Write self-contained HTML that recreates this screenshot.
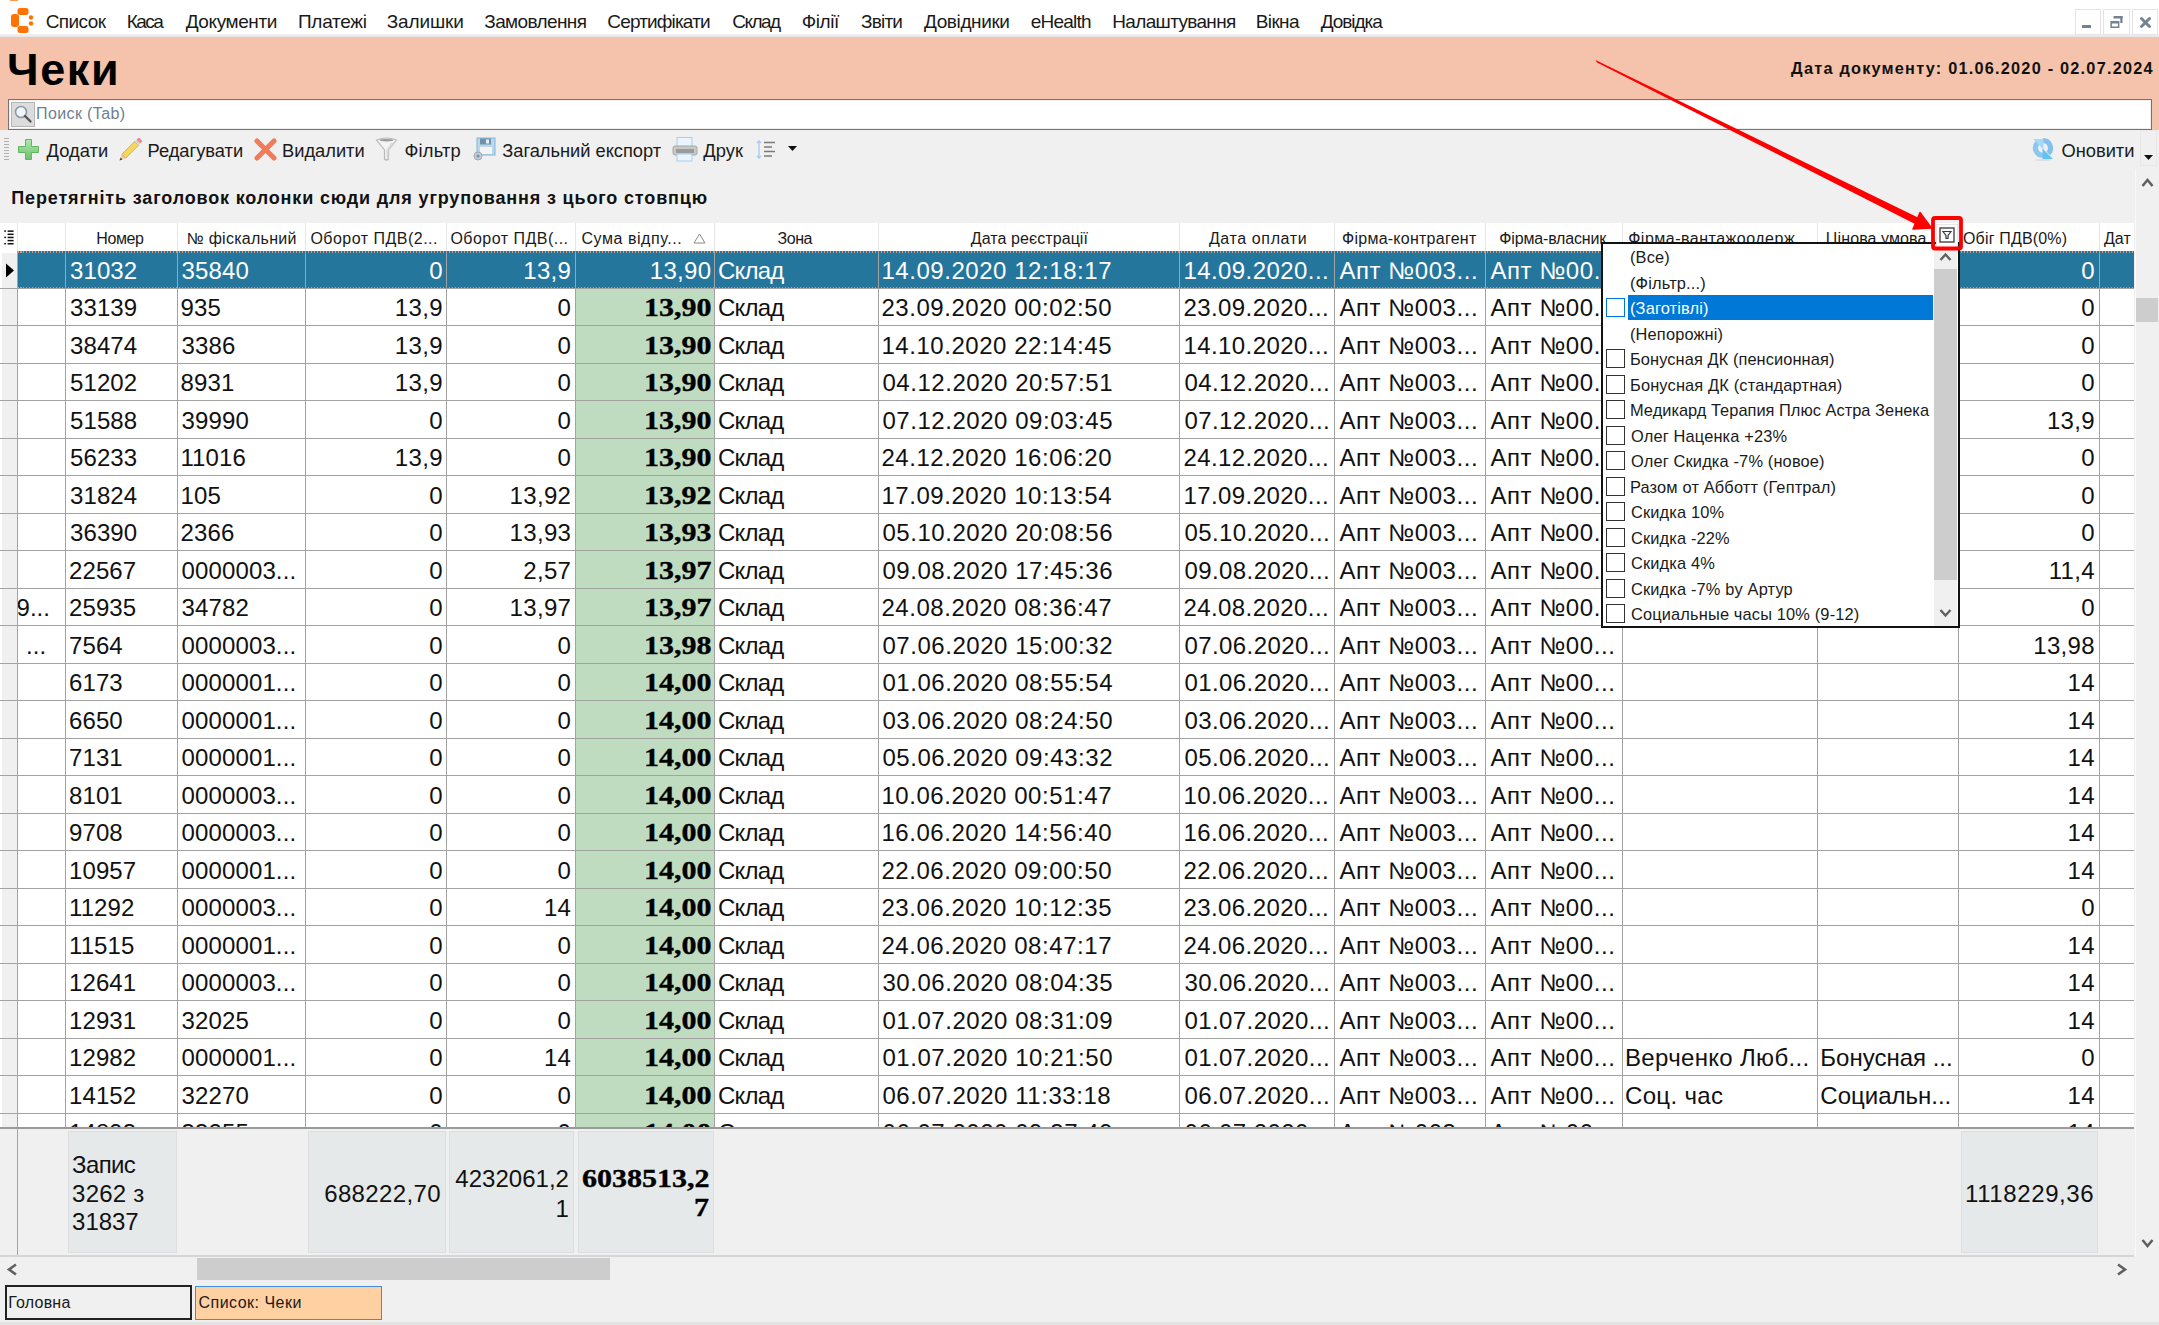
<!DOCTYPE html>
<html><head><meta charset="utf-8"><style>
*{margin:0;padding:0;box-sizing:border-box}
html,body{width:2159px;height:1325px;overflow:hidden;background:#f0f0f0;font-family:'Liberation Sans', sans-serif;color:#000}
.a{position:absolute}
.t{position:absolute;white-space:nowrap;line-height:1;left:0;top:0}
</style></head><body>
<div class="a" style="left:0;top:0;width:2159px;height:35px;background:#fff"></div>
<div class="a" style="left:0;top:34px;width:2159px;height:3px;background:linear-gradient(#f4f4f4,#e4e4e4)"></div>
<div class="a" style="left:10px;top:0;width:8px;height:1px;background:#ff9a50"></div>
<svg class="a" style="left:10px;top:7px" width="25" height="27" viewBox="0 0 25 27">
<g fill="#ff7300">
<rect x="7.5" y="1" width="11" height="7" rx="2.5"></rect>
<rect x="1" y="7" width="8" height="13" rx="3"></rect>
<rect x="7.5" y="19" width="11" height="7" rx="2.5"></rect>
<circle cx="21" cy="10.5" r="2.2"></circle>
<circle cx="21" cy="16.5" r="2.2"></circle>
</g></svg>
<div class="t" style="font-size: 19px; color: rgb(26, 26, 26); letter-spacing: -0.581px; top: 12px; left: 45.7px;">Список</div>
<div class="t" style="font-size: 19px; color: rgb(26, 26, 26); letter-spacing: -1.512px; top: 12px; left: 126.7px;">Каса</div>
<div class="t" style="font-size: 19px; color: rgb(26, 26, 26); letter-spacing: -0.411px; top: 12px; left: 185.7px;">Документи</div>
<div class="t" style="font-size: 19px; color: rgb(26, 26, 26); letter-spacing: -0.291px; top: 12px; left: 298px;">Платежі</div>
<div class="t" style="font-size: 19px; color: rgb(26, 26, 26); letter-spacing: -0.116px; top: 12px; left: 386.7px;">Залишки</div>
<div class="t" style="font-size: 19px; color: rgb(26, 26, 26); letter-spacing: -0.619px; top: 12px; left: 484.3px;">Замовлення</div>
<div class="t" style="font-size: 19px; color: rgb(26, 26, 26); letter-spacing: -0.849px; top: 12px; left: 607.3px;">Сертифікати</div>
<div class="t" style="font-size: 19px; color: rgb(26, 26, 26); letter-spacing: -1.55px; top: 12px; left: 732.3px;">Склад</div>
<div class="t" style="font-size: 19px; color: rgb(26, 26, 26); letter-spacing: -0.418px; top: 12px; left: 801.7px;">Філії</div>
<div class="t" style="font-size: 19px; color: rgb(26, 26, 26); letter-spacing: -0.798px; top: 12px; left: 861px;">Звіти</div>
<div class="t" style="font-size: 19px; color: rgb(26, 26, 26); letter-spacing: -0.396px; top: 12px; left: 924px;">Довідники</div>
<div class="t" style="font-size: 19px; color: rgb(26, 26, 26); letter-spacing: -0.77px; top: 12px; left: 1030.7px;">eHealth</div>
<div class="t" style="font-size: 19px; color: rgb(26, 26, 26); letter-spacing: -0.667px; top: 12px; left: 1112.3px;">Налаштування</div>
<div class="t" style="font-size: 19px; color: rgb(26, 26, 26); letter-spacing: -0.6px; top: 12px; left: 1255.7px;">Вікна</div>
<div class="t" style="font-size: 19px; color: rgb(26, 26, 26); letter-spacing: -1.03px; top: 12px; left: 1320.7px;">Довідка</div>
<div class="a" style="left:2075px;top:9px;width:26px;height:26px;background:#fff;border:1px solid #e4e4e4"></div>
<div class="a" style="left:2103px;top:9px;width:27px;height:26px;background:#fff;border:1px solid #e4e4e4"></div>
<div class="a" style="left:2132px;top:9px;width:26px;height:26px;background:#fff;border:1px solid #e4e4e4"></div>
<div class="a" style="left:2082px;top:25px;width:9px;height:3px;background:#718292"></div>
<svg class="a" style="left:2110px;top:16px" width="13" height="12" viewBox="0 0 13 12"><g fill="#718292"><rect x="3.5" y="0" width="9" height="2.5"></rect><rect x="10.3" y="0" width="2.2" height="7"></rect><rect x="0.4" y="5" width="9" height="7"></rect></g><rect x="1.9" y="7.5" width="6" height="3" fill="#fff"></rect></svg>
<svg class="a" style="left:2140px;top:17px" width="11" height="11" viewBox="0 0 11 11"><g stroke="#718292" stroke-width="2.8" stroke-linecap="round"><line x1="1.5" y1="1.5" x2="9.5" y2="9.5"></line><line x1="9.5" y1="1.5" x2="1.5" y2="9.5"></line></g></svg>
<div class="a" style="left:0;top:37px;width:2159px;height:93px;background:#f5c3ab"></div>
<div class="t" style="font-size: 45px; color: rgb(0, 0, 0); font-weight: 700; letter-spacing: 1.611px; top: 47px; left: 7px;">Чеки</div>
<div class="t" style="font-size: 16.3px; color: rgb(17, 17, 17); font-weight: 700; letter-spacing: 1.222px; top: 60.3px; left: 1791.1px;">Дата документу: 01.06.2020 - 02.07.2024</div>
<div class="a" style="left:8px;top:99px;width:2144px;height:31px;background:#fff;border:1px solid #747474;box-shadow:inset 0 0 0 1px #eeeeee"></div>
<div class="a" style="left:11px;top:102px;width:24px;height:25px;background:#dcdcdc;border:1px solid #b4b4b4"></div>
<svg class="a" style="left:13px;top:104px" width="20" height="20" viewBox="0 0 20 20"><circle cx="8" cy="8" r="5.5" fill="#eef6fb" stroke="#8a9aa6" stroke-width="1.6"></circle><line x1="12" y1="12" x2="17.5" y2="17.5" stroke="#555" stroke-width="2.4" stroke-linecap="round"></line></svg>
<div class="t" style="font-size: 16px; color: rgb(110, 127, 146); letter-spacing: 0.389px; top: 106px; left: 36px;">Поиск (Tab)</div>
<div class="a" style="left:4px;top:138px;width:5px;height:1.2px;background:#b0b0b0"></div>
<div class="a" style="left:4px;top:141px;width:5px;height:1.2px;background:#b0b0b0"></div>
<div class="a" style="left:4px;top:144px;width:5px;height:1.2px;background:#b0b0b0"></div>
<div class="a" style="left:4px;top:147px;width:5px;height:1.2px;background:#b0b0b0"></div>
<div class="a" style="left:4px;top:150px;width:5px;height:1.2px;background:#b0b0b0"></div>
<div class="a" style="left:4px;top:153px;width:5px;height:1.2px;background:#b0b0b0"></div>
<div class="a" style="left:4px;top:156px;width:5px;height:1.2px;background:#b0b0b0"></div>
<div class="a" style="left:4px;top:159px;width:5px;height:1.2px;background:#b0b0b0"></div>
<svg class="a" style="left:17px;top:138px" width="23" height="23" viewBox="0 0 23 23"><defs><linearGradient id="gp" x1="0" y1="0" x2="0" y2="1"><stop offset="0" stop-color="#aee8ae"></stop><stop offset="1" stop-color="#6cc06c"></stop></linearGradient></defs><path d="M8.5,1.5 H14.5 V8.5 H21.5 V14.5 H14.5 V21.5 H8.5 V14.5 H1.5 V8.5 H8.5 Z" fill="url(#gp)" stroke="#62b462" stroke-width="1" stroke-linejoin="round"></path></svg>
<svg class="a" style="left:116px;top:135px" width="29" height="29" viewBox="0 0 29 29">
<g transform="rotate(-45 14.5 14.5)">
<polygon points="-1,14.5 5,11.8 5,17.2" fill="#f4c8a8"></polygon><polygon points="-1,14.5 1.8,13.2 1.8,15.8" fill="#444"></polygon>
<rect x="5" y="11.8" width="18" height="5.4" fill="#f6d65c" stroke="#c8a03a" stroke-width="0.7"></rect>
<rect x="23" y="11.8" width="2.6" height="5.4" fill="#d6d6d6"></rect><rect x="25.6" y="11.8" width="3.4" height="5.4" rx="1" fill="#f08a8a"></rect></g></svg>
<svg class="a" style="left:254px;top:138px" width="23" height="23" viewBox="0 0 23 23"><g stroke="#f07a5a" stroke-width="5" stroke-linecap="round"><line x1="3" y1="3" x2="20" y2="20"></line><line x1="20" y1="3" x2="3" y2="20"></line></g></svg>
<svg class="a" style="left:375px;top:137px" width="23" height="25" viewBox="0 0 23 25"><path d="M1.5,3 Q11.5,-1 21.5,3 L13.5,13 L13.5,22 Q11.5,24 9.5,22 L9.5,13 Z" fill="#f4f4f4" stroke="#b9b9b9" stroke-width="1.2"></path><ellipse cx="11.5" cy="3.2" rx="7" ry="1.2" fill="#9a9a9a"></ellipse><path d="M13.5,13 L13.5,22 L11.5,22 L11.5,13 L16,6 L19,6Z" fill="#d8d8d8"></path></svg>
<svg class="a" style="left:472px;top:137px" width="25" height="25" viewBox="0 0 25 25"><rect x="5" y="1" width="18" height="17" fill="#bcd6ea" stroke="#7eb6d8" stroke-width="1"></rect><rect x="8" y="1.5" width="11" height="6" fill="#7090b0"></rect><rect x="14" y="2.5" width="3" height="4" fill="#e8f0f8"></rect><rect x="8" y="10" width="12" height="7" fill="#f4f4f4"></rect><circle cx="6" cy="19" r="4" fill="#c8ccd0" stroke="#a0a8b0"></circle><circle cx="6" cy="19" r="1.5" fill="#6090c0"></circle></svg>
<svg class="a" style="left:672px;top:137px" width="26" height="25" viewBox="0 0 26 25"><rect x="5" y="0.5" width="15" height="10" fill="#eaf4fc" stroke="#a8cdef"></rect><rect x="1" y="9" width="24" height="9" rx="2" fill="#c8c8c8" stroke="#a8a8a8"></rect><rect x="4" y="12" width="18" height="4" fill="#9a9a9a"></rect><rect x="5" y="17" width="15" height="7" fill="#eaf4fc" stroke="#a8cdef"></rect></svg>
<svg class="a" style="left:756px;top:139px" width="20" height="21" viewBox="0 0 20 21"><g stroke="#a8c8ee" stroke-width="1.3" fill="none"><line x1="3" y1="2" x2="3" y2="19"></line><polyline points="1,4 3,2 5,4"></polyline><polyline points="1,17 3,19 5,17"></polyline></g><g stroke="#7a7a7a" stroke-width="1.5"><line x1="8" y1="3.5" x2="19" y2="3.5"></line><line x1="8" y1="8" x2="16" y2="8"></line><line x1="8" y1="12.5" x2="19" y2="12.5"></line><line x1="8" y1="17" x2="16" y2="17"></line></g></svg>
<svg class="a" style="left:788px;top:146px" width="9" height="6" viewBox="0 0 9 6"><polygon points="0,0 9,0 4.5,5" fill="#111"></polygon></svg>
<div class="t" style="font-size: 18.3px; color: rgb(26, 26, 26); letter-spacing: 0.069px; top: 141.7px; left: 46.5px;">Додати</div>
<div class="t" style="font-size: 18.3px; color: rgb(26, 26, 26); letter-spacing: 0.006px; top: 141.7px; left: 147.5px;">Редагувати</div>
<div class="t" style="font-size: 18.3px; color: rgb(26, 26, 26); letter-spacing: 0.001px; top: 141.7px; left: 282px;">Видалити</div>
<div class="t" style="font-size: 18.3px; color: rgb(26, 26, 26); letter-spacing: 0.221px; top: 141.7px; left: 404.4px;">Фільтр</div>
<div class="t" style="font-size: 18.3px; color: rgb(26, 26, 26); letter-spacing: -0.023px; top: 141.7px; left: 502.3px;">Загальний експорт</div>
<div class="t" style="font-size: 18.3px; color: rgb(26, 26, 26); letter-spacing: 0.072px; top: 141.7px; left: 703.3px;">Друк</div>
<div class="t" style="font-size: 18.3px; color: rgb(26, 26, 26); letter-spacing: -0.013px; top: 141.7px; left: 2061.5px;">Оновити</div>
<svg class="a" style="left:2031px;top:137px" width="24" height="24" viewBox="0 0 24 24"><path d="M12,18.5 A7.5,7.5 0 0 1 6.7,5.7" stroke="#8fc6ee" stroke-width="5.2" fill="none"></path><path d="M12,3.5 A7.5,7.5 0 0 1 17.3,16.3" stroke="#84c0ec" stroke-width="5.2" fill="none"></path><polygon points="2,2 12.5,2 12.5,12.5" fill="#a6d8f8"></polygon><polygon points="22,22 11.5,22 11.5,11.5" fill="#62c2f6"></polygon><ellipse cx="12" cy="23" rx="8" ry="1" fill="#000" opacity="0.08"></ellipse></svg>
<div class="a" style="left:2140px;top:130px;width:17px;height:36px;border:1px solid #e8e8e8"></div>
<svg class="a" style="left:2144px;top:155px" width="9" height="6" viewBox="0 0 9 6"><polygon points="0,0 9,0 4.5,5" fill="#111"></polygon></svg>
<div class="t" style="font-size: 18px; color: rgb(17, 17, 17); font-weight: 700; letter-spacing: 0.845px; top: 188.6px; left: 11.3px;">Перетягніть заголовок колонки сюди для угруповання з цього стовпцю</div>
<div class="a" style="left:2135px;top:169px;width:24px;height:1087px;background:#f0f0f0;border-left:1px solid #fafafa"></div>
<svg class="a" style="left:2141px;top:177px" width="13" height="11" viewBox="0 0 13 11"><polyline points="1.5,9 6.5,3 11.5,9" fill="none" stroke="#606060" stroke-width="2.6"></polyline></svg>
<div class="a" style="left:2136px;top:298px;width:22px;height:24px;background:#cdcdcd"></div>
<svg class="a" style="left:2141px;top:1238px" width="13" height="11" viewBox="0 0 13 11"><polyline points="1.5,2 6.5,8 11.5,2" fill="none" stroke="#606060" stroke-width="2.6"></polyline></svg>
<div class="a" style="left:0;top:223px;width:2134px;height:904px;background:#fff"></div>
<div class="a" style="left:1.5px;top:252.5px;width:15.5px;height:876px;background:#f0f0f0"></div>
<div class="a" style="left:575px;top:251px;width:140px;height:876px;background:#c0dcc0"></div>
<div class="a" style="left:17px;top:223px;width:1px;height:28px;background:#e6e6e6"></div>
<div class="a" style="left:65px;top:223px;width:1px;height:28px;background:#e6e6e6"></div>
<div class="a" style="left:177px;top:223px;width:1px;height:28px;background:#e6e6e6"></div>
<div class="a" style="left:305px;top:223px;width:1px;height:28px;background:#e6e6e6"></div>
<div class="a" style="left:446px;top:223px;width:1px;height:28px;background:#e6e6e6"></div>
<div class="a" style="left:575px;top:223px;width:1px;height:28px;background:#e6e6e6"></div>
<div class="a" style="left:714px;top:223px;width:1px;height:28px;background:#e6e6e6"></div>
<div class="a" style="left:878px;top:223px;width:1px;height:28px;background:#e6e6e6"></div>
<div class="a" style="left:1179px;top:223px;width:1px;height:28px;background:#e6e6e6"></div>
<div class="a" style="left:1334px;top:223px;width:1px;height:28px;background:#e6e6e6"></div>
<div class="a" style="left:1485px;top:223px;width:1px;height:28px;background:#e6e6e6"></div>
<div class="a" style="left:1622px;top:223px;width:1px;height:28px;background:#e6e6e6"></div>
<div class="a" style="left:1817px;top:223px;width:1px;height:28px;background:#e6e6e6"></div>
<div class="a" style="left:1958px;top:223px;width:1px;height:28px;background:#e6e6e6"></div>
<div class="a" style="left:2099px;top:223px;width:1px;height:28px;background:#e6e6e6"></div>
<svg class="a" style="left:3px;top:229px" width="12" height="17" viewBox="0 0 12 17"><g fill="#111"><rect x="1.3" y="1.3" width="1.6" height="1.6"></rect><rect x="1.3" y="7.6" width="1.6" height="1.6"></rect><rect x="1.3" y="13.9" width="1.6" height="1.6"></rect><rect x="4.6" y="1.4" width="6" height="1.5"></rect><rect x="4.6" y="4.55" width="6" height="1.5"></rect><rect x="4.6" y="7.7" width="6" height="1.5"></rect><rect x="4.6" y="10.85" width="6" height="1.5"></rect><rect x="4.6" y="14" width="6" height="1.5"></rect></g></svg>
<div class="t" style="font-size: 16px; color: rgb(26, 26, 26); letter-spacing: -0.413px; top: 230.9px; left: 96.3px;">Номер</div>
<div class="t" style="font-size: 16px; color: rgb(26, 26, 26); letter-spacing: 0.271px; top: 230.9px; left: 186.5px;">№ фіскальний</div>
<div class="t" style="font-size: 16px; color: rgb(26, 26, 26); letter-spacing: 0.482px; top: 230.9px; left: 310.4px;">Оборот ПДВ(2...</div>
<div class="t" style="font-size: 16px; color: rgb(26, 26, 26); letter-spacing: 0.481px; top: 230.9px; left: 450.4px;">Оборот ПДВ(...</div>
<div class="t" style="font-size: 16px; color: rgb(26, 26, 26); letter-spacing: 0.561px; top: 230.9px; left: 581.4px;">Сума відпу...</div>
<div class="t" style="font-size: 16px; color: rgb(26, 26, 26); letter-spacing: -0.466px; top: 230.9px; left: 777.6px;">Зона</div>
<div class="t" style="font-size: 16px; color: rgb(26, 26, 26); letter-spacing: 0.073px; top: 230.9px; left: 970.8px;">Дата реєстрації</div>
<div class="t" style="font-size: 16px; color: rgb(26, 26, 26); letter-spacing: 0.615px; top: 230.9px; left: 1208.9px;">Дата оплати</div>
<div class="t" style="font-size: 16px; color: rgb(26, 26, 26); letter-spacing: 0.253px; top: 230.9px; left: 1342px;">Фірма-контрагент</div>
<div class="t" style="font-size: 16px; color: rgb(26, 26, 26); letter-spacing: -0.165px; top: 230.9px; left: 1499.3px;">Фірма-власник</div>
<div class="t" style="font-size: 16px; color: rgb(26, 26, 26); letter-spacing: 0.499px; top: 230.9px; left: 1628.2px;">Фірма-вантажоодерж...</div>
<div class="t" style="font-size: 16px; color: rgb(26, 26, 26); letter-spacing: 0.079px; top: 230.9px; left: 1825.7px;">Цінова умова</div>
<div class="t" style="font-size: 16px; color: rgb(26, 26, 26); letter-spacing: 0.163px; top: 230.9px; left: 1963px;">Обіг ПДВ(0%)</div>
<div class="t" style="font-size: 16px; color: rgb(26, 26, 26); top: 230.9px; left: 2104px;">Дат</div>
<svg class="a" style="left:693px;top:233px" width="13" height="11" viewBox="0 0 13 11"><polygon points="6.5,1 12,10 1,10" fill="none" stroke="#8a8a8a" stroke-width="1"></polygon></svg>
<div class="a" style="left:0;top:0;width:2134px;height:1127px;overflow:hidden">
<div class="a" style="left:17px;top:251.0px;width:2117px;height:37.5px;background:#25769c"></div>
<div class="a" style="left:17px;top:251.0px;width:2117px;height:1.5px;background:repeating-linear-gradient(90deg,#d49a7c 0 1.5px,#25769c 1.5px 3px)"></div>
<div class="a" style="left:17px;top:286.5px;width:2117px;height:1.5px;background:repeating-linear-gradient(90deg,#d49a7c 0 1.5px,#25769c 1.5px 3px)"></div>
<svg class="a" style="left:5px;top:263.0px" width="10" height="15" viewBox="0 0 10 15"><polygon points="1,0.5 9,7.5 1,14.5" fill="#000"></polygon></svg>
<div class="a" style="left:0;top:287.5px;width:2134px;height:1px;background:#a3a3a3"></div>
<div class="t" style="font-size: 24px; color: rgb(255, 255, 255); letter-spacing: 0.1px; top: 258.5px; left: 70px;">31032</div>
<div class="t" style="font-size: 24px; color: rgb(255, 255, 255); letter-spacing: 0.15px; top: 258.5px; left: 181.4px;">35840</div>
<div class="t" style="font-size: 24px; color: rgb(255, 255, 255); letter-spacing: 0.35px; top: 258.5px; left: 429.2px;">0</div>
<div class="t" style="font-size: 24px; color: rgb(255, 255, 255); letter-spacing: 0.35px; top: 258.5px; left: 523.19px;">13,9</div>
<div class="t" style="font-size: 24px; color: rgb(255, 255, 255); letter-spacing: 0.35px; top: 258.5px; left: 649.69px;">13,90</div>
<div class="t" style="font-size: 24px; color: rgb(255, 255, 255); letter-spacing: -0.8px; top: 258.5px; left: 718px;">Склад</div>
<div class="t" style="font-size: 24px; color: rgb(255, 255, 255); letter-spacing: 0.55px; top: 258.5px; left: 881.4px;">14.09.2020 12:18:17</div>
<div class="t" style="font-size: 24px; color: rgb(255, 255, 255); letter-spacing: 0.43px; top: 258.5px; left: 1183.4px;">14.09.2020...</div>
<div class="t" style="font-size: 24px; color: rgb(255, 255, 255); letter-spacing: 0.58px; top: 258.5px; left: 1339.4px;">Апт №003...</div>
<div class="t" style="font-size: 24px; color: rgb(255, 255, 255); letter-spacing: 0.6px; top: 258.5px; left: 1490.4px;">Апт №00...</div>
<div class="t" style="font-size: 24px; color: rgb(255, 255, 255); letter-spacing: 0.35px; top: 258.5px; left: 2081.3px;">0</div>
<div class="a" style="left:0;top:325.0px;width:2134px;height:1px;background:#a3a3a3"></div>
<div class="t" style="font-size: 24px; color: rgb(17, 17, 17); letter-spacing: 0.1px; top: 296px; left: 70px;">33139</div>
<div class="t" style="font-size: 24px; color: rgb(17, 17, 17); letter-spacing: 0.15px; top: 296px; left: 180.4px;">935</div>
<div class="t" style="font-size: 24px; color: rgb(17, 17, 17); letter-spacing: 0.35px; top: 296px; left: 394.79px;">13,9</div>
<div class="t" style="font-size: 24px; color: rgb(17, 17, 17); letter-spacing: 0.35px; top: 296px; left: 557.6px;">0</div>
<div class="t" style="font-size: 25px; color: rgb(0, 0, 0); font-weight: 700; font-family: &quot;Liberation Serif&quot;, serif; -webkit-text-stroke: 0.35px rgb(0, 0, 0); transform: scaleX(1.2); transform-origin: 0px 0px; top: 295px; left: 643.9px;">13,90</div>
<div class="t" style="font-size: 24px; color: rgb(17, 17, 17); letter-spacing: -0.8px; top: 296px; left: 718px;">Склад</div>
<div class="t" style="font-size: 24px; color: rgb(17, 17, 17); letter-spacing: 0.55px; top: 296px; left: 881.4px;">23.09.2020 00:02:50</div>
<div class="t" style="font-size: 24px; color: rgb(17, 17, 17); letter-spacing: 0.43px; top: 296px; left: 1183.4px;">23.09.2020...</div>
<div class="t" style="font-size: 24px; color: rgb(17, 17, 17); letter-spacing: 0.58px; top: 296px; left: 1339.4px;">Апт №003...</div>
<div class="t" style="font-size: 24px; color: rgb(17, 17, 17); letter-spacing: 0.6px; top: 296px; left: 1490.4px;">Апт №00...</div>
<div class="t" style="font-size: 24px; color: rgb(17, 17, 17); letter-spacing: 0.35px; top: 296px; left: 2081.3px;">0</div>
<div class="a" style="left:0;top:362.5px;width:2134px;height:1px;background:#a3a3a3"></div>
<div class="t" style="font-size: 24px; color: rgb(17, 17, 17); letter-spacing: 0.1px; top: 333.5px; left: 70px;">38474</div>
<div class="t" style="font-size: 24px; color: rgb(17, 17, 17); letter-spacing: 0.15px; top: 333.5px; left: 181.4px;">3386</div>
<div class="t" style="font-size: 24px; color: rgb(17, 17, 17); letter-spacing: 0.35px; top: 333.5px; left: 394.79px;">13,9</div>
<div class="t" style="font-size: 24px; color: rgb(17, 17, 17); letter-spacing: 0.35px; top: 333.5px; left: 557.6px;">0</div>
<div class="t" style="font-size: 25px; color: rgb(0, 0, 0); font-weight: 700; font-family: &quot;Liberation Serif&quot;, serif; -webkit-text-stroke: 0.35px rgb(0, 0, 0); transform: scaleX(1.2); transform-origin: 0px 0px; top: 332.5px; left: 643.9px;">13,90</div>
<div class="t" style="font-size: 24px; color: rgb(17, 17, 17); letter-spacing: -0.8px; top: 333.5px; left: 718px;">Склад</div>
<div class="t" style="font-size: 24px; color: rgb(17, 17, 17); letter-spacing: 0.55px; top: 333.5px; left: 881.4px;">14.10.2020 22:14:45</div>
<div class="t" style="font-size: 24px; color: rgb(17, 17, 17); letter-spacing: 0.43px; top: 333.5px; left: 1183.4px;">14.10.2020...</div>
<div class="t" style="font-size: 24px; color: rgb(17, 17, 17); letter-spacing: 0.58px; top: 333.5px; left: 1339.4px;">Апт №003...</div>
<div class="t" style="font-size: 24px; color: rgb(17, 17, 17); letter-spacing: 0.6px; top: 333.5px; left: 1490.4px;">Апт №00...</div>
<div class="t" style="font-size: 24px; color: rgb(17, 17, 17); letter-spacing: 0.35px; top: 333.5px; left: 2081.3px;">0</div>
<div class="a" style="left:0;top:400.0px;width:2134px;height:1px;background:#a3a3a3"></div>
<div class="t" style="font-size: 24px; color: rgb(17, 17, 17); letter-spacing: 0.1px; top: 371px; left: 70px;">51202</div>
<div class="t" style="font-size: 24px; color: rgb(17, 17, 17); letter-spacing: 0.15px; top: 371px; left: 180.4px;">8931</div>
<div class="t" style="font-size: 24px; color: rgb(17, 17, 17); letter-spacing: 0.35px; top: 371px; left: 394.79px;">13,9</div>
<div class="t" style="font-size: 24px; color: rgb(17, 17, 17); letter-spacing: 0.35px; top: 371px; left: 557.6px;">0</div>
<div class="t" style="font-size: 25px; color: rgb(0, 0, 0); font-weight: 700; font-family: &quot;Liberation Serif&quot;, serif; -webkit-text-stroke: 0.35px rgb(0, 0, 0); transform: scaleX(1.2); transform-origin: 0px 0px; top: 370px; left: 643.9px;">13,90</div>
<div class="t" style="font-size: 24px; color: rgb(17, 17, 17); letter-spacing: -0.8px; top: 371px; left: 718px;">Склад</div>
<div class="t" style="font-size: 24px; color: rgb(17, 17, 17); letter-spacing: 0.55px; top: 371px; left: 882.4px;">04.12.2020 20:57:51</div>
<div class="t" style="font-size: 24px; color: rgb(17, 17, 17); letter-spacing: 0.43px; top: 371px; left: 1184.4px;">04.12.2020...</div>
<div class="t" style="font-size: 24px; color: rgb(17, 17, 17); letter-spacing: 0.58px; top: 371px; left: 1339.4px;">Апт №003...</div>
<div class="t" style="font-size: 24px; color: rgb(17, 17, 17); letter-spacing: 0.6px; top: 371px; left: 1490.4px;">Апт №00...</div>
<div class="t" style="font-size: 24px; color: rgb(17, 17, 17); letter-spacing: 0.35px; top: 371px; left: 2081.3px;">0</div>
<div class="a" style="left:0;top:437.5px;width:2134px;height:1px;background:#a3a3a3"></div>
<div class="t" style="font-size: 24px; color: rgb(17, 17, 17); letter-spacing: 0.1px; top: 408.5px; left: 70px;">51588</div>
<div class="t" style="font-size: 24px; color: rgb(17, 17, 17); letter-spacing: 0.15px; top: 408.5px; left: 181.4px;">39990</div>
<div class="t" style="font-size: 24px; color: rgb(17, 17, 17); letter-spacing: 0.35px; top: 408.5px; left: 429.2px;">0</div>
<div class="t" style="font-size: 24px; color: rgb(17, 17, 17); letter-spacing: 0.35px; top: 408.5px; left: 557.6px;">0</div>
<div class="t" style="font-size: 25px; color: rgb(0, 0, 0); font-weight: 700; font-family: &quot;Liberation Serif&quot;, serif; -webkit-text-stroke: 0.35px rgb(0, 0, 0); transform: scaleX(1.2); transform-origin: 0px 0px; top: 407.5px; left: 643.9px;">13,90</div>
<div class="t" style="font-size: 24px; color: rgb(17, 17, 17); letter-spacing: -0.8px; top: 408.5px; left: 718px;">Склад</div>
<div class="t" style="font-size: 24px; color: rgb(17, 17, 17); letter-spacing: 0.55px; top: 408.5px; left: 882.4px;">07.12.2020 09:03:45</div>
<div class="t" style="font-size: 24px; color: rgb(17, 17, 17); letter-spacing: 0.43px; top: 408.5px; left: 1184.4px;">07.12.2020...</div>
<div class="t" style="font-size: 24px; color: rgb(17, 17, 17); letter-spacing: 0.58px; top: 408.5px; left: 1339.4px;">Апт №003...</div>
<div class="t" style="font-size: 24px; color: rgb(17, 17, 17); letter-spacing: 0.6px; top: 408.5px; left: 1490.4px;">Апт №00...</div>
<div class="t" style="font-size: 24px; color: rgb(17, 17, 17); letter-spacing: 0.35px; top: 408.5px; left: 2046.89px;">13,9</div>
<div class="a" style="left:0;top:475.0px;width:2134px;height:1px;background:#a3a3a3"></div>
<div class="t" style="font-size: 24px; color: rgb(17, 17, 17); letter-spacing: 0.1px; top: 446px; left: 70px;">56233</div>
<div class="t" style="font-size: 24px; color: rgb(17, 17, 17); letter-spacing: 0.15px; top: 446px; left: 180.4px;">11016</div>
<div class="t" style="font-size: 24px; color: rgb(17, 17, 17); letter-spacing: 0.35px; top: 446px; left: 394.79px;">13,9</div>
<div class="t" style="font-size: 24px; color: rgb(17, 17, 17); letter-spacing: 0.35px; top: 446px; left: 557.6px;">0</div>
<div class="t" style="font-size: 25px; color: rgb(0, 0, 0); font-weight: 700; font-family: &quot;Liberation Serif&quot;, serif; -webkit-text-stroke: 0.35px rgb(0, 0, 0); transform: scaleX(1.2); transform-origin: 0px 0px; top: 445px; left: 643.9px;">13,90</div>
<div class="t" style="font-size: 24px; color: rgb(17, 17, 17); letter-spacing: -0.8px; top: 446px; left: 718px;">Склад</div>
<div class="t" style="font-size: 24px; color: rgb(17, 17, 17); letter-spacing: 0.55px; top: 446px; left: 881.4px;">24.12.2020 16:06:20</div>
<div class="t" style="font-size: 24px; color: rgb(17, 17, 17); letter-spacing: 0.43px; top: 446px; left: 1183.4px;">24.12.2020...</div>
<div class="t" style="font-size: 24px; color: rgb(17, 17, 17); letter-spacing: 0.58px; top: 446px; left: 1339.4px;">Апт №003...</div>
<div class="t" style="font-size: 24px; color: rgb(17, 17, 17); letter-spacing: 0.6px; top: 446px; left: 1490.4px;">Апт №00...</div>
<div class="t" style="font-size: 24px; color: rgb(17, 17, 17); letter-spacing: 0.35px; top: 446px; left: 2081.3px;">0</div>
<div class="a" style="left:0;top:512.5px;width:2134px;height:1px;background:#a3a3a3"></div>
<div class="t" style="font-size: 24px; color: rgb(17, 17, 17); letter-spacing: 0.1px; top: 483.5px; left: 70px;">31824</div>
<div class="t" style="font-size: 24px; color: rgb(17, 17, 17); letter-spacing: 0.15px; top: 483.5px; left: 180.4px;">105</div>
<div class="t" style="font-size: 24px; color: rgb(17, 17, 17); letter-spacing: 0.35px; top: 483.5px; left: 429.2px;">0</div>
<div class="t" style="font-size: 24px; color: rgb(17, 17, 17); letter-spacing: 0.35px; top: 483.5px; left: 509.49px;">13,92</div>
<div class="t" style="font-size: 25px; color: rgb(0, 0, 0); font-weight: 700; font-family: &quot;Liberation Serif&quot;, serif; -webkit-text-stroke: 0.35px rgb(0, 0, 0); transform: scaleX(1.2); transform-origin: 0px 0px; top: 482.5px; left: 643.9px;">13,92</div>
<div class="t" style="font-size: 24px; color: rgb(17, 17, 17); letter-spacing: -0.8px; top: 483.5px; left: 718px;">Склад</div>
<div class="t" style="font-size: 24px; color: rgb(17, 17, 17); letter-spacing: 0.55px; top: 483.5px; left: 881.4px;">17.09.2020 10:13:54</div>
<div class="t" style="font-size: 24px; color: rgb(17, 17, 17); letter-spacing: 0.43px; top: 483.5px; left: 1183.4px;">17.09.2020...</div>
<div class="t" style="font-size: 24px; color: rgb(17, 17, 17); letter-spacing: 0.58px; top: 483.5px; left: 1339.4px;">Апт №003...</div>
<div class="t" style="font-size: 24px; color: rgb(17, 17, 17); letter-spacing: 0.6px; top: 483.5px; left: 1490.4px;">Апт №00...</div>
<div class="t" style="font-size: 24px; color: rgb(17, 17, 17); letter-spacing: 0.35px; top: 483.5px; left: 2081.3px;">0</div>
<div class="a" style="left:0;top:550.0px;width:2134px;height:1px;background:#a3a3a3"></div>
<div class="t" style="font-size: 24px; color: rgb(17, 17, 17); letter-spacing: 0.1px; top: 521px; left: 70px;">36390</div>
<div class="t" style="font-size: 24px; color: rgb(17, 17, 17); letter-spacing: 0.15px; top: 521px; left: 180.4px;">2366</div>
<div class="t" style="font-size: 24px; color: rgb(17, 17, 17); letter-spacing: 0.35px; top: 521px; left: 429.2px;">0</div>
<div class="t" style="font-size: 24px; color: rgb(17, 17, 17); letter-spacing: 0.35px; top: 521px; left: 509.49px;">13,93</div>
<div class="t" style="font-size: 25px; color: rgb(0, 0, 0); font-weight: 700; font-family: &quot;Liberation Serif&quot;, serif; -webkit-text-stroke: 0.35px rgb(0, 0, 0); transform: scaleX(1.2); transform-origin: 0px 0px; top: 520px; left: 643.9px;">13,93</div>
<div class="t" style="font-size: 24px; color: rgb(17, 17, 17); letter-spacing: -0.8px; top: 521px; left: 718px;">Склад</div>
<div class="t" style="font-size: 24px; color: rgb(17, 17, 17); letter-spacing: 0.55px; top: 521px; left: 882.4px;">05.10.2020 20:08:56</div>
<div class="t" style="font-size: 24px; color: rgb(17, 17, 17); letter-spacing: 0.43px; top: 521px; left: 1184.4px;">05.10.2020...</div>
<div class="t" style="font-size: 24px; color: rgb(17, 17, 17); letter-spacing: 0.58px; top: 521px; left: 1339.4px;">Апт №003...</div>
<div class="t" style="font-size: 24px; color: rgb(17, 17, 17); letter-spacing: 0.6px; top: 521px; left: 1490.4px;">Апт №00...</div>
<div class="t" style="font-size: 24px; color: rgb(17, 17, 17); letter-spacing: 0.35px; top: 521px; left: 2081.3px;">0</div>
<div class="a" style="left:0;top:587.5px;width:2134px;height:1px;background:#a3a3a3"></div>
<div class="t" style="font-size: 24px; color: rgb(17, 17, 17); letter-spacing: 0.1px; top: 558.5px; left: 69px;">22567</div>
<div class="t" style="font-size: 24px; color: rgb(17, 17, 17); letter-spacing: 0.15px; top: 558.5px; left: 181.4px;">0000003...</div>
<div class="t" style="font-size: 24px; color: rgb(17, 17, 17); letter-spacing: 0.35px; top: 558.5px; left: 429.2px;">0</div>
<div class="t" style="font-size: 24px; color: rgb(17, 17, 17); letter-spacing: 0.35px; top: 558.5px; left: 523.19px;">2,57</div>
<div class="t" style="font-size: 25px; color: rgb(0, 0, 0); font-weight: 700; font-family: &quot;Liberation Serif&quot;, serif; -webkit-text-stroke: 0.35px rgb(0, 0, 0); transform: scaleX(1.2); transform-origin: 0px 0px; top: 557.5px; left: 643.9px;">13,97</div>
<div class="t" style="font-size: 24px; color: rgb(17, 17, 17); letter-spacing: -0.8px; top: 558.5px; left: 718px;">Склад</div>
<div class="t" style="font-size: 24px; color: rgb(17, 17, 17); letter-spacing: 0.55px; top: 558.5px; left: 882.4px;">09.08.2020 17:45:36</div>
<div class="t" style="font-size: 24px; color: rgb(17, 17, 17); letter-spacing: 0.43px; top: 558.5px; left: 1184.4px;">09.08.2020...</div>
<div class="t" style="font-size: 24px; color: rgb(17, 17, 17); letter-spacing: 0.58px; top: 558.5px; left: 1339.4px;">Апт №003...</div>
<div class="t" style="font-size: 24px; color: rgb(17, 17, 17); letter-spacing: 0.6px; top: 558.5px; left: 1490.4px;">Апт №00...</div>
<div class="t" style="font-size: 24px; color: rgb(17, 17, 17); letter-spacing: 0.35px; top: 558.5px; left: 2048.67px;">11,4</div>
<div class="a" style="left:0;top:625.0px;width:2134px;height:1px;background:#a3a3a3"></div>
<div class="t" style="font-size: 24px; color: rgb(17, 17, 17); top: 596px; left: 16.6px;">9...</div>
<div class="t" style="font-size: 24px; color: rgb(17, 17, 17); letter-spacing: 0.1px; top: 596px; left: 69px;">25935</div>
<div class="t" style="font-size: 24px; color: rgb(17, 17, 17); letter-spacing: 0.15px; top: 596px; left: 181.4px;">34782</div>
<div class="t" style="font-size: 24px; color: rgb(17, 17, 17); letter-spacing: 0.35px; top: 596px; left: 429.2px;">0</div>
<div class="t" style="font-size: 24px; color: rgb(17, 17, 17); letter-spacing: 0.35px; top: 596px; left: 509.49px;">13,97</div>
<div class="t" style="font-size: 25px; color: rgb(0, 0, 0); font-weight: 700; font-family: &quot;Liberation Serif&quot;, serif; -webkit-text-stroke: 0.35px rgb(0, 0, 0); transform: scaleX(1.2); transform-origin: 0px 0px; top: 595px; left: 643.9px;">13,97</div>
<div class="t" style="font-size: 24px; color: rgb(17, 17, 17); letter-spacing: -0.8px; top: 596px; left: 718px;">Склад</div>
<div class="t" style="font-size: 24px; color: rgb(17, 17, 17); letter-spacing: 0.55px; top: 596px; left: 881.4px;">24.08.2020 08:36:47</div>
<div class="t" style="font-size: 24px; color: rgb(17, 17, 17); letter-spacing: 0.43px; top: 596px; left: 1183.4px;">24.08.2020...</div>
<div class="t" style="font-size: 24px; color: rgb(17, 17, 17); letter-spacing: 0.58px; top: 596px; left: 1339.4px;">Апт №003...</div>
<div class="t" style="font-size: 24px; color: rgb(17, 17, 17); letter-spacing: 0.6px; top: 596px; left: 1490.4px;">Апт №00...</div>
<div class="t" style="font-size: 24px; color: rgb(17, 17, 17); letter-spacing: 0.35px; top: 596px; left: 2081.3px;">0</div>
<div class="a" style="left:0;top:662.5px;width:2134px;height:1px;background:#a3a3a3"></div>
<div class="t" style="font-size: 24px; color: rgb(17, 17, 17); top: 633.5px; left: 26.1px;">...</div>
<div class="t" style="font-size: 24px; color: rgb(17, 17, 17); letter-spacing: 0.1px; top: 633.5px; left: 69px;">7564</div>
<div class="t" style="font-size: 24px; color: rgb(17, 17, 17); letter-spacing: 0.15px; top: 633.5px; left: 181.4px;">0000003...</div>
<div class="t" style="font-size: 24px; color: rgb(17, 17, 17); letter-spacing: 0.35px; top: 633.5px; left: 429.2px;">0</div>
<div class="t" style="font-size: 24px; color: rgb(17, 17, 17); letter-spacing: 0.35px; top: 633.5px; left: 557.6px;">0</div>
<div class="t" style="font-size: 25px; color: rgb(0, 0, 0); font-weight: 700; font-family: &quot;Liberation Serif&quot;, serif; -webkit-text-stroke: 0.35px rgb(0, 0, 0); transform: scaleX(1.2); transform-origin: 0px 0px; top: 632.5px; left: 643.9px;">13,98</div>
<div class="t" style="font-size: 24px; color: rgb(17, 17, 17); letter-spacing: -0.8px; top: 633.5px; left: 718px;">Склад</div>
<div class="t" style="font-size: 24px; color: rgb(17, 17, 17); letter-spacing: 0.55px; top: 633.5px; left: 882.4px;">07.06.2020 15:00:32</div>
<div class="t" style="font-size: 24px; color: rgb(17, 17, 17); letter-spacing: 0.43px; top: 633.5px; left: 1184.4px;">07.06.2020...</div>
<div class="t" style="font-size: 24px; color: rgb(17, 17, 17); letter-spacing: 0.58px; top: 633.5px; left: 1339.4px;">Апт №003...</div>
<div class="t" style="font-size: 24px; color: rgb(17, 17, 17); letter-spacing: 0.6px; top: 633.5px; left: 1490.4px;">Апт №00...</div>
<div class="t" style="font-size: 24px; color: rgb(17, 17, 17); letter-spacing: 0.35px; top: 633.5px; left: 2033.19px;">13,98</div>
<div class="a" style="left:0;top:700.0px;width:2134px;height:1px;background:#a3a3a3"></div>
<div class="t" style="font-size: 24px; color: rgb(17, 17, 17); letter-spacing: 0.1px; top: 671px; left: 69px;">6173</div>
<div class="t" style="font-size: 24px; color: rgb(17, 17, 17); letter-spacing: 0.15px; top: 671px; left: 181.4px;">0000001...</div>
<div class="t" style="font-size: 24px; color: rgb(17, 17, 17); letter-spacing: 0.35px; top: 671px; left: 429.2px;">0</div>
<div class="t" style="font-size: 24px; color: rgb(17, 17, 17); letter-spacing: 0.35px; top: 671px; left: 557.6px;">0</div>
<div class="t" style="font-size: 25px; color: rgb(0, 0, 0); font-weight: 700; font-family: &quot;Liberation Serif&quot;, serif; -webkit-text-stroke: 0.35px rgb(0, 0, 0); transform: scaleX(1.2); transform-origin: 0px 0px; top: 670px; left: 643.9px;">14,00</div>
<div class="t" style="font-size: 24px; color: rgb(17, 17, 17); letter-spacing: -0.8px; top: 671px; left: 718px;">Склад</div>
<div class="t" style="font-size: 24px; color: rgb(17, 17, 17); letter-spacing: 0.55px; top: 671px; left: 882.4px;">01.06.2020 08:55:54</div>
<div class="t" style="font-size: 24px; color: rgb(17, 17, 17); letter-spacing: 0.43px; top: 671px; left: 1184.4px;">01.06.2020...</div>
<div class="t" style="font-size: 24px; color: rgb(17, 17, 17); letter-spacing: 0.58px; top: 671px; left: 1339.4px;">Апт №003...</div>
<div class="t" style="font-size: 24px; color: rgb(17, 17, 17); letter-spacing: 0.6px; top: 671px; left: 1490.4px;">Апт №00...</div>
<div class="t" style="font-size: 24px; color: rgb(17, 17, 17); letter-spacing: 0.35px; top: 671px; left: 2067.6px;">14</div>
<div class="a" style="left:0;top:737.5px;width:2134px;height:1px;background:#a3a3a3"></div>
<div class="t" style="font-size: 24px; color: rgb(17, 17, 17); letter-spacing: 0.1px; top: 708.5px; left: 69px;">6650</div>
<div class="t" style="font-size: 24px; color: rgb(17, 17, 17); letter-spacing: 0.15px; top: 708.5px; left: 181.4px;">0000001...</div>
<div class="t" style="font-size: 24px; color: rgb(17, 17, 17); letter-spacing: 0.35px; top: 708.5px; left: 429.2px;">0</div>
<div class="t" style="font-size: 24px; color: rgb(17, 17, 17); letter-spacing: 0.35px; top: 708.5px; left: 557.6px;">0</div>
<div class="t" style="font-size: 25px; color: rgb(0, 0, 0); font-weight: 700; font-family: &quot;Liberation Serif&quot;, serif; -webkit-text-stroke: 0.35px rgb(0, 0, 0); transform: scaleX(1.2); transform-origin: 0px 0px; top: 707.5px; left: 643.9px;">14,00</div>
<div class="t" style="font-size: 24px; color: rgb(17, 17, 17); letter-spacing: -0.8px; top: 708.5px; left: 718px;">Склад</div>
<div class="t" style="font-size: 24px; color: rgb(17, 17, 17); letter-spacing: 0.55px; top: 708.5px; left: 882.4px;">03.06.2020 08:24:50</div>
<div class="t" style="font-size: 24px; color: rgb(17, 17, 17); letter-spacing: 0.43px; top: 708.5px; left: 1184.4px;">03.06.2020...</div>
<div class="t" style="font-size: 24px; color: rgb(17, 17, 17); letter-spacing: 0.58px; top: 708.5px; left: 1339.4px;">Апт №003...</div>
<div class="t" style="font-size: 24px; color: rgb(17, 17, 17); letter-spacing: 0.6px; top: 708.5px; left: 1490.4px;">Апт №00...</div>
<div class="t" style="font-size: 24px; color: rgb(17, 17, 17); letter-spacing: 0.35px; top: 708.5px; left: 2067.6px;">14</div>
<div class="a" style="left:0;top:775.0px;width:2134px;height:1px;background:#a3a3a3"></div>
<div class="t" style="font-size: 24px; color: rgb(17, 17, 17); letter-spacing: 0.1px; top: 746px; left: 69px;">7131</div>
<div class="t" style="font-size: 24px; color: rgb(17, 17, 17); letter-spacing: 0.15px; top: 746px; left: 181.4px;">0000001...</div>
<div class="t" style="font-size: 24px; color: rgb(17, 17, 17); letter-spacing: 0.35px; top: 746px; left: 429.2px;">0</div>
<div class="t" style="font-size: 24px; color: rgb(17, 17, 17); letter-spacing: 0.35px; top: 746px; left: 557.6px;">0</div>
<div class="t" style="font-size: 25px; color: rgb(0, 0, 0); font-weight: 700; font-family: &quot;Liberation Serif&quot;, serif; -webkit-text-stroke: 0.35px rgb(0, 0, 0); transform: scaleX(1.2); transform-origin: 0px 0px; top: 745px; left: 643.9px;">14,00</div>
<div class="t" style="font-size: 24px; color: rgb(17, 17, 17); letter-spacing: -0.8px; top: 746px; left: 718px;">Склад</div>
<div class="t" style="font-size: 24px; color: rgb(17, 17, 17); letter-spacing: 0.55px; top: 746px; left: 882.4px;">05.06.2020 09:43:32</div>
<div class="t" style="font-size: 24px; color: rgb(17, 17, 17); letter-spacing: 0.43px; top: 746px; left: 1184.4px;">05.06.2020...</div>
<div class="t" style="font-size: 24px; color: rgb(17, 17, 17); letter-spacing: 0.58px; top: 746px; left: 1339.4px;">Апт №003...</div>
<div class="t" style="font-size: 24px; color: rgb(17, 17, 17); letter-spacing: 0.6px; top: 746px; left: 1490.4px;">Апт №00...</div>
<div class="t" style="font-size: 24px; color: rgb(17, 17, 17); letter-spacing: 0.35px; top: 746px; left: 2067.6px;">14</div>
<div class="a" style="left:0;top:812.5px;width:2134px;height:1px;background:#a3a3a3"></div>
<div class="t" style="font-size: 24px; color: rgb(17, 17, 17); letter-spacing: 0.1px; top: 783.5px; left: 69px;">8101</div>
<div class="t" style="font-size: 24px; color: rgb(17, 17, 17); letter-spacing: 0.15px; top: 783.5px; left: 181.4px;">0000003...</div>
<div class="t" style="font-size: 24px; color: rgb(17, 17, 17); letter-spacing: 0.35px; top: 783.5px; left: 429.2px;">0</div>
<div class="t" style="font-size: 24px; color: rgb(17, 17, 17); letter-spacing: 0.35px; top: 783.5px; left: 557.6px;">0</div>
<div class="t" style="font-size: 25px; color: rgb(0, 0, 0); font-weight: 700; font-family: &quot;Liberation Serif&quot;, serif; -webkit-text-stroke: 0.35px rgb(0, 0, 0); transform: scaleX(1.2); transform-origin: 0px 0px; top: 782.5px; left: 643.9px;">14,00</div>
<div class="t" style="font-size: 24px; color: rgb(17, 17, 17); letter-spacing: -0.8px; top: 783.5px; left: 718px;">Склад</div>
<div class="t" style="font-size: 24px; color: rgb(17, 17, 17); letter-spacing: 0.55px; top: 783.5px; left: 881.4px;">10.06.2020 00:51:47</div>
<div class="t" style="font-size: 24px; color: rgb(17, 17, 17); letter-spacing: 0.43px; top: 783.5px; left: 1183.4px;">10.06.2020...</div>
<div class="t" style="font-size: 24px; color: rgb(17, 17, 17); letter-spacing: 0.58px; top: 783.5px; left: 1339.4px;">Апт №003...</div>
<div class="t" style="font-size: 24px; color: rgb(17, 17, 17); letter-spacing: 0.6px; top: 783.5px; left: 1490.4px;">Апт №00...</div>
<div class="t" style="font-size: 24px; color: rgb(17, 17, 17); letter-spacing: 0.35px; top: 783.5px; left: 2067.6px;">14</div>
<div class="a" style="left:0;top:850.0px;width:2134px;height:1px;background:#a3a3a3"></div>
<div class="t" style="font-size: 24px; color: rgb(17, 17, 17); letter-spacing: 0.1px; top: 821px; left: 69px;">9708</div>
<div class="t" style="font-size: 24px; color: rgb(17, 17, 17); letter-spacing: 0.15px; top: 821px; left: 181.4px;">0000003...</div>
<div class="t" style="font-size: 24px; color: rgb(17, 17, 17); letter-spacing: 0.35px; top: 821px; left: 429.2px;">0</div>
<div class="t" style="font-size: 24px; color: rgb(17, 17, 17); letter-spacing: 0.35px; top: 821px; left: 557.6px;">0</div>
<div class="t" style="font-size: 25px; color: rgb(0, 0, 0); font-weight: 700; font-family: &quot;Liberation Serif&quot;, serif; -webkit-text-stroke: 0.35px rgb(0, 0, 0); transform: scaleX(1.2); transform-origin: 0px 0px; top: 820px; left: 643.9px;">14,00</div>
<div class="t" style="font-size: 24px; color: rgb(17, 17, 17); letter-spacing: -0.8px; top: 821px; left: 718px;">Склад</div>
<div class="t" style="font-size: 24px; color: rgb(17, 17, 17); letter-spacing: 0.55px; top: 821px; left: 881.4px;">16.06.2020 14:56:40</div>
<div class="t" style="font-size: 24px; color: rgb(17, 17, 17); letter-spacing: 0.43px; top: 821px; left: 1183.4px;">16.06.2020...</div>
<div class="t" style="font-size: 24px; color: rgb(17, 17, 17); letter-spacing: 0.58px; top: 821px; left: 1339.4px;">Апт №003...</div>
<div class="t" style="font-size: 24px; color: rgb(17, 17, 17); letter-spacing: 0.6px; top: 821px; left: 1490.4px;">Апт №00...</div>
<div class="t" style="font-size: 24px; color: rgb(17, 17, 17); letter-spacing: 0.35px; top: 821px; left: 2067.6px;">14</div>
<div class="a" style="left:0;top:887.5px;width:2134px;height:1px;background:#a3a3a3"></div>
<div class="t" style="font-size: 24px; color: rgb(17, 17, 17); letter-spacing: 0.1px; top: 858.5px; left: 69px;">10957</div>
<div class="t" style="font-size: 24px; color: rgb(17, 17, 17); letter-spacing: 0.15px; top: 858.5px; left: 181.4px;">0000001...</div>
<div class="t" style="font-size: 24px; color: rgb(17, 17, 17); letter-spacing: 0.35px; top: 858.5px; left: 429.2px;">0</div>
<div class="t" style="font-size: 24px; color: rgb(17, 17, 17); letter-spacing: 0.35px; top: 858.5px; left: 557.6px;">0</div>
<div class="t" style="font-size: 25px; color: rgb(0, 0, 0); font-weight: 700; font-family: &quot;Liberation Serif&quot;, serif; -webkit-text-stroke: 0.35px rgb(0, 0, 0); transform: scaleX(1.2); transform-origin: 0px 0px; top: 857.5px; left: 643.9px;">14,00</div>
<div class="t" style="font-size: 24px; color: rgb(17, 17, 17); letter-spacing: -0.8px; top: 858.5px; left: 718px;">Склад</div>
<div class="t" style="font-size: 24px; color: rgb(17, 17, 17); letter-spacing: 0.55px; top: 858.5px; left: 881.4px;">22.06.2020 09:00:50</div>
<div class="t" style="font-size: 24px; color: rgb(17, 17, 17); letter-spacing: 0.43px; top: 858.5px; left: 1183.4px;">22.06.2020...</div>
<div class="t" style="font-size: 24px; color: rgb(17, 17, 17); letter-spacing: 0.58px; top: 858.5px; left: 1339.4px;">Апт №003...</div>
<div class="t" style="font-size: 24px; color: rgb(17, 17, 17); letter-spacing: 0.6px; top: 858.5px; left: 1490.4px;">Апт №00...</div>
<div class="t" style="font-size: 24px; color: rgb(17, 17, 17); letter-spacing: 0.35px; top: 858.5px; left: 2067.6px;">14</div>
<div class="a" style="left:0;top:925.0px;width:2134px;height:1px;background:#a3a3a3"></div>
<div class="t" style="font-size: 24px; color: rgb(17, 17, 17); letter-spacing: 0.1px; top: 896px; left: 69px;">11292</div>
<div class="t" style="font-size: 24px; color: rgb(17, 17, 17); letter-spacing: 0.15px; top: 896px; left: 181.4px;">0000003...</div>
<div class="t" style="font-size: 24px; color: rgb(17, 17, 17); letter-spacing: 0.35px; top: 896px; left: 429.2px;">0</div>
<div class="t" style="font-size: 24px; color: rgb(17, 17, 17); letter-spacing: 0.35px; top: 896px; left: 543.9px;">14</div>
<div class="t" style="font-size: 25px; color: rgb(0, 0, 0); font-weight: 700; font-family: &quot;Liberation Serif&quot;, serif; -webkit-text-stroke: 0.35px rgb(0, 0, 0); transform: scaleX(1.2); transform-origin: 0px 0px; top: 895px; left: 643.9px;">14,00</div>
<div class="t" style="font-size: 24px; color: rgb(17, 17, 17); letter-spacing: -0.8px; top: 896px; left: 718px;">Склад</div>
<div class="t" style="font-size: 24px; color: rgb(17, 17, 17); letter-spacing: 0.55px; top: 896px; left: 881.4px;">23.06.2020 10:12:35</div>
<div class="t" style="font-size: 24px; color: rgb(17, 17, 17); letter-spacing: 0.43px; top: 896px; left: 1183.4px;">23.06.2020...</div>
<div class="t" style="font-size: 24px; color: rgb(17, 17, 17); letter-spacing: 0.58px; top: 896px; left: 1339.4px;">Апт №003...</div>
<div class="t" style="font-size: 24px; color: rgb(17, 17, 17); letter-spacing: 0.6px; top: 896px; left: 1490.4px;">Апт №00...</div>
<div class="t" style="font-size: 24px; color: rgb(17, 17, 17); letter-spacing: 0.35px; top: 896px; left: 2081.3px;">0</div>
<div class="a" style="left:0;top:962.5px;width:2134px;height:1px;background:#a3a3a3"></div>
<div class="t" style="font-size: 24px; color: rgb(17, 17, 17); letter-spacing: 0.1px; top: 933.5px; left: 69px;">11515</div>
<div class="t" style="font-size: 24px; color: rgb(17, 17, 17); letter-spacing: 0.15px; top: 933.5px; left: 181.4px;">0000001...</div>
<div class="t" style="font-size: 24px; color: rgb(17, 17, 17); letter-spacing: 0.35px; top: 933.5px; left: 429.2px;">0</div>
<div class="t" style="font-size: 24px; color: rgb(17, 17, 17); letter-spacing: 0.35px; top: 933.5px; left: 557.6px;">0</div>
<div class="t" style="font-size: 25px; color: rgb(0, 0, 0); font-weight: 700; font-family: &quot;Liberation Serif&quot;, serif; -webkit-text-stroke: 0.35px rgb(0, 0, 0); transform: scaleX(1.2); transform-origin: 0px 0px; top: 932.5px; left: 643.9px;">14,00</div>
<div class="t" style="font-size: 24px; color: rgb(17, 17, 17); letter-spacing: -0.8px; top: 933.5px; left: 718px;">Склад</div>
<div class="t" style="font-size: 24px; color: rgb(17, 17, 17); letter-spacing: 0.55px; top: 933.5px; left: 881.4px;">24.06.2020 08:47:17</div>
<div class="t" style="font-size: 24px; color: rgb(17, 17, 17); letter-spacing: 0.43px; top: 933.5px; left: 1183.4px;">24.06.2020...</div>
<div class="t" style="font-size: 24px; color: rgb(17, 17, 17); letter-spacing: 0.58px; top: 933.5px; left: 1339.4px;">Апт №003...</div>
<div class="t" style="font-size: 24px; color: rgb(17, 17, 17); letter-spacing: 0.6px; top: 933.5px; left: 1490.4px;">Апт №00...</div>
<div class="t" style="font-size: 24px; color: rgb(17, 17, 17); letter-spacing: 0.35px; top: 933.5px; left: 2067.6px;">14</div>
<div class="a" style="left:0;top:1000.0px;width:2134px;height:1px;background:#a3a3a3"></div>
<div class="t" style="font-size: 24px; color: rgb(17, 17, 17); letter-spacing: 0.1px; top: 971px; left: 69px;">12641</div>
<div class="t" style="font-size: 24px; color: rgb(17, 17, 17); letter-spacing: 0.15px; top: 971px; left: 181.4px;">0000003...</div>
<div class="t" style="font-size: 24px; color: rgb(17, 17, 17); letter-spacing: 0.35px; top: 971px; left: 429.2px;">0</div>
<div class="t" style="font-size: 24px; color: rgb(17, 17, 17); letter-spacing: 0.35px; top: 971px; left: 557.6px;">0</div>
<div class="t" style="font-size: 25px; color: rgb(0, 0, 0); font-weight: 700; font-family: &quot;Liberation Serif&quot;, serif; -webkit-text-stroke: 0.35px rgb(0, 0, 0); transform: scaleX(1.2); transform-origin: 0px 0px; top: 970px; left: 643.9px;">14,00</div>
<div class="t" style="font-size: 24px; color: rgb(17, 17, 17); letter-spacing: -0.8px; top: 971px; left: 718px;">Склад</div>
<div class="t" style="font-size: 24px; color: rgb(17, 17, 17); letter-spacing: 0.55px; top: 971px; left: 882.4px;">30.06.2020 08:04:35</div>
<div class="t" style="font-size: 24px; color: rgb(17, 17, 17); letter-spacing: 0.43px; top: 971px; left: 1184.4px;">30.06.2020...</div>
<div class="t" style="font-size: 24px; color: rgb(17, 17, 17); letter-spacing: 0.58px; top: 971px; left: 1339.4px;">Апт №003...</div>
<div class="t" style="font-size: 24px; color: rgb(17, 17, 17); letter-spacing: 0.6px; top: 971px; left: 1490.4px;">Апт №00...</div>
<div class="t" style="font-size: 24px; color: rgb(17, 17, 17); letter-spacing: 0.35px; top: 971px; left: 2067.6px;">14</div>
<div class="a" style="left:0;top:1037.5px;width:2134px;height:1px;background:#a3a3a3"></div>
<div class="t" style="font-size: 24px; color: rgb(17, 17, 17); letter-spacing: 0.1px; top: 1008.5px; left: 69px;">12931</div>
<div class="t" style="font-size: 24px; color: rgb(17, 17, 17); letter-spacing: 0.15px; top: 1008.5px; left: 181.4px;">32025</div>
<div class="t" style="font-size: 24px; color: rgb(17, 17, 17); letter-spacing: 0.35px; top: 1008.5px; left: 429.2px;">0</div>
<div class="t" style="font-size: 24px; color: rgb(17, 17, 17); letter-spacing: 0.35px; top: 1008.5px; left: 557.6px;">0</div>
<div class="t" style="font-size: 25px; color: rgb(0, 0, 0); font-weight: 700; font-family: &quot;Liberation Serif&quot;, serif; -webkit-text-stroke: 0.35px rgb(0, 0, 0); transform: scaleX(1.2); transform-origin: 0px 0px; top: 1007.5px; left: 643.9px;">14,00</div>
<div class="t" style="font-size: 24px; color: rgb(17, 17, 17); letter-spacing: -0.8px; top: 1008.5px; left: 718px;">Склад</div>
<div class="t" style="font-size: 24px; color: rgb(17, 17, 17); letter-spacing: 0.55px; top: 1008.5px; left: 882.4px;">01.07.2020 08:31:09</div>
<div class="t" style="font-size: 24px; color: rgb(17, 17, 17); letter-spacing: 0.43px; top: 1008.5px; left: 1184.4px;">01.07.2020...</div>
<div class="t" style="font-size: 24px; color: rgb(17, 17, 17); letter-spacing: 0.58px; top: 1008.5px; left: 1339.4px;">Апт №003...</div>
<div class="t" style="font-size: 24px; color: rgb(17, 17, 17); letter-spacing: 0.6px; top: 1008.5px; left: 1490.4px;">Апт №00...</div>
<div class="t" style="font-size: 24px; color: rgb(17, 17, 17); letter-spacing: 0.35px; top: 1008.5px; left: 2067.6px;">14</div>
<div class="a" style="left:0;top:1075.0px;width:2134px;height:1px;background:#a3a3a3"></div>
<div class="t" style="font-size: 24px; color: rgb(17, 17, 17); letter-spacing: 0.1px; top: 1046px; left: 69px;">12982</div>
<div class="t" style="font-size: 24px; color: rgb(17, 17, 17); letter-spacing: 0.15px; top: 1046px; left: 181.4px;">0000001...</div>
<div class="t" style="font-size: 24px; color: rgb(17, 17, 17); letter-spacing: 0.35px; top: 1046px; left: 429.2px;">0</div>
<div class="t" style="font-size: 24px; color: rgb(17, 17, 17); letter-spacing: 0.35px; top: 1046px; left: 543.9px;">14</div>
<div class="t" style="font-size: 25px; color: rgb(0, 0, 0); font-weight: 700; font-family: &quot;Liberation Serif&quot;, serif; -webkit-text-stroke: 0.35px rgb(0, 0, 0); transform: scaleX(1.2); transform-origin: 0px 0px; top: 1045px; left: 643.9px;">14,00</div>
<div class="t" style="font-size: 24px; color: rgb(17, 17, 17); letter-spacing: -0.8px; top: 1046px; left: 718px;">Склад</div>
<div class="t" style="font-size: 24px; color: rgb(17, 17, 17); letter-spacing: 0.55px; top: 1046px; left: 882.4px;">01.07.2020 10:21:50</div>
<div class="t" style="font-size: 24px; color: rgb(17, 17, 17); letter-spacing: 0.43px; top: 1046px; left: 1184.4px;">01.07.2020...</div>
<div class="t" style="font-size: 24px; color: rgb(17, 17, 17); letter-spacing: 0.58px; top: 1046px; left: 1339.4px;">Апт №003...</div>
<div class="t" style="font-size: 24px; color: rgb(17, 17, 17); letter-spacing: 0.6px; top: 1046px; left: 1490.4px;">Апт №00...</div>
<div class="t" style="font-size: 24px; color: rgb(17, 17, 17); letter-spacing: 0.33px; top: 1046px; left: 1625px;">Верченко Люб...</div>
<div class="t" style="font-size: 24px; color: rgb(17, 17, 17); top: 1046px; left: 1820.3px;">Бонусная ...</div>
<div class="t" style="font-size: 24px; color: rgb(17, 17, 17); letter-spacing: 0.35px; top: 1046px; left: 2081.3px;">0</div>
<div class="a" style="left:0;top:1112.5px;width:2134px;height:1px;background:#a3a3a3"></div>
<div class="t" style="font-size: 24px; color: rgb(17, 17, 17); letter-spacing: 0.1px; top: 1083.5px; left: 69px;">14152</div>
<div class="t" style="font-size: 24px; color: rgb(17, 17, 17); letter-spacing: 0.15px; top: 1083.5px; left: 181.4px;">32270</div>
<div class="t" style="font-size: 24px; color: rgb(17, 17, 17); letter-spacing: 0.35px; top: 1083.5px; left: 429.2px;">0</div>
<div class="t" style="font-size: 24px; color: rgb(17, 17, 17); letter-spacing: 0.35px; top: 1083.5px; left: 557.6px;">0</div>
<div class="t" style="font-size: 25px; color: rgb(0, 0, 0); font-weight: 700; font-family: &quot;Liberation Serif&quot;, serif; -webkit-text-stroke: 0.35px rgb(0, 0, 0); transform: scaleX(1.2); transform-origin: 0px 0px; top: 1082.5px; left: 643.9px;">14,00</div>
<div class="t" style="font-size: 24px; color: rgb(17, 17, 17); letter-spacing: -0.8px; top: 1083.5px; left: 718px;">Склад</div>
<div class="t" style="font-size: 24px; color: rgb(17, 17, 17); letter-spacing: 0.55px; top: 1083.5px; left: 882.4px;">06.07.2020 11:33:18</div>
<div class="t" style="font-size: 24px; color: rgb(17, 17, 17); letter-spacing: 0.43px; top: 1083.5px; left: 1184.4px;">06.07.2020...</div>
<div class="t" style="font-size: 24px; color: rgb(17, 17, 17); letter-spacing: 0.58px; top: 1083.5px; left: 1339.4px;">Апт №003...</div>
<div class="t" style="font-size: 24px; color: rgb(17, 17, 17); letter-spacing: 0.6px; top: 1083.5px; left: 1490.4px;">Апт №00...</div>
<div class="t" style="font-size: 24px; color: rgb(17, 17, 17); letter-spacing: 0.33px; top: 1083.5px; left: 1625px;">Соц. час</div>
<div class="t" style="font-size: 24px; color: rgb(17, 17, 17); top: 1083.5px; left: 1820.3px;">Социальн...</div>
<div class="t" style="font-size: 24px; color: rgb(17, 17, 17); letter-spacing: 0.35px; top: 1083.5px; left: 2067.6px;">14</div>
<div class="a" style="left:0;top:1150.0px;width:2134px;height:1px;background:#a3a3a3"></div>
<div class="t" style="font-size: 24px; color: rgb(17, 17, 17); letter-spacing: 0.1px; top: 1121px; left: 69px;">14893</div>
<div class="t" style="font-size: 24px; color: rgb(17, 17, 17); letter-spacing: 0.15px; top: 1121px; left: 181.4px;">33255</div>
<div class="t" style="font-size: 24px; color: rgb(17, 17, 17); letter-spacing: 0.35px; top: 1121px; left: 429.2px;">0</div>
<div class="t" style="font-size: 24px; color: rgb(17, 17, 17); letter-spacing: 0.35px; top: 1121px; left: 557.6px;">0</div>
<div class="t" style="font-size: 25px; color: rgb(0, 0, 0); font-weight: 700; font-family: &quot;Liberation Serif&quot;, serif; -webkit-text-stroke: 0.35px rgb(0, 0, 0); transform: scaleX(1.2); transform-origin: 0px 0px; top: 1120px; left: 643.9px;">14,00</div>
<div class="t" style="font-size: 24px; color: rgb(17, 17, 17); letter-spacing: -0.8px; top: 1121px; left: 718px;">Склад</div>
<div class="t" style="font-size: 24px; color: rgb(17, 17, 17); letter-spacing: 0.55px; top: 1121px; left: 882.4px;">06.07.2020 09:37:49</div>
<div class="t" style="font-size: 24px; color: rgb(17, 17, 17); letter-spacing: 0.43px; top: 1121px; left: 1184.4px;">06.07.2020...</div>
<div class="t" style="font-size: 24px; color: rgb(17, 17, 17); letter-spacing: 0.58px; top: 1121px; left: 1339.4px;">Апт №003...</div>
<div class="t" style="font-size: 24px; color: rgb(17, 17, 17); letter-spacing: 0.6px; top: 1121px; left: 1490.4px;">Апт №00...</div>
<div class="t" style="font-size: 24px; color: rgb(17, 17, 17); letter-spacing: 0.35px; top: 1121px; left: 2067.6px;">14</div>
<div class="a" style="left:17px;top:251px;width:1px;height:876px;background:#a3a3a3"></div>
<div class="a" style="left:65px;top:251px;width:1px;height:876px;background:#a3a3a3"></div>
<div class="a" style="left:177px;top:251px;width:1px;height:876px;background:#a3a3a3"></div>
<div class="a" style="left:305px;top:251px;width:1px;height:876px;background:#a3a3a3"></div>
<div class="a" style="left:446px;top:251px;width:1px;height:876px;background:#a3a3a3"></div>
<div class="a" style="left:575px;top:251px;width:1px;height:876px;background:#a3a3a3"></div>
<div class="a" style="left:714px;top:251px;width:1px;height:876px;background:#a3a3a3"></div>
<div class="a" style="left:878px;top:251px;width:1px;height:876px;background:#a3a3a3"></div>
<div class="a" style="left:1179px;top:251px;width:1px;height:876px;background:#a3a3a3"></div>
<div class="a" style="left:1334px;top:251px;width:1px;height:876px;background:#a3a3a3"></div>
<div class="a" style="left:1485px;top:251px;width:1px;height:876px;background:#a3a3a3"></div>
<div class="a" style="left:1622px;top:251px;width:1px;height:876px;background:#a3a3a3"></div>
<div class="a" style="left:1817px;top:251px;width:1px;height:876px;background:#a3a3a3"></div>
<div class="a" style="left:1958px;top:251px;width:1px;height:876px;background:#a3a3a3"></div>
<div class="a" style="left:2099px;top:251px;width:1px;height:876px;background:#a3a3a3"></div>
<div class="a" style="left:2134px;top:251px;width:1px;height:876px;background:#a3a3a3"></div>
</div>
<div class="a" style="left:0;top:1127px;width:2134px;height:2px;background:#9a9a9a"></div>
<div class="a" style="left:0;top:1129px;width:2134px;height:127px;background:#f0f0f0"></div>
<div class="a" style="left:17px;top:1128px;width:1px;height:127px;background:#a3a3a3"></div>
<div class="a" style="left:0;top:1255px;width:2134px;height:2px;background:#d6d6d6"></div>
<div class="a" style="left:68px;top:1131px;width:109px;height:122px;background:#e6e9ea;border:1px solid #dcdfe0"></div>
<div class="a" style="left:308px;top:1131px;width:138px;height:122px;background:#e6e9ea;border:1px solid #dcdfe0"></div>
<div class="a" style="left:449px;top:1131px;width:125px;height:122px;background:#e6e9ea;border:1px solid #dcdfe0"></div>
<div class="a" style="left:578px;top:1131px;width:136px;height:122px;background:#e6e9ea;border:1px solid #dcdfe0"></div>
<div class="a" style="left:1961px;top:1131px;width:137px;height:122px;background:#e6e9ea;border:1px solid #dcdfe0"></div>
<div class="t" style="font-size: 24px; color: rgb(17, 17, 17); letter-spacing: -0.637px; top: 1152.7px; left: 72.1px;">Запис</div>
<div class="t" style="font-size: 24px; color: rgb(17, 17, 17); letter-spacing: 0.228px; top: 1181.7px; left: 72.1px;">3262 з</div>
<div class="t" style="font-size: 24px; color: rgb(17, 17, 17); letter-spacing: -0.048px; top: 1210px; left: 72.1px;">31837</div>
<div class="t" style="font-size: 24px; color: rgb(17, 17, 17); letter-spacing: 0.362px; top: 1181.7px; left: 324.2px;">688222,70</div>
<div class="t" style="font-size: 24px; color: rgb(17, 17, 17); letter-spacing: 0.025px; top: 1166.7px; left: 455.3px;">4232061,2</div>
<div class="t" style="font-size: 24px; color: rgb(17, 17, 17); top: 1196.7px; left: 555.6px;">1</div>
<div class="t" style="font-size: 25px; color: rgb(0, 0, 0); font-weight: 700; font-family: &quot;Liberation Serif&quot;, serif; -webkit-text-stroke: 0.35px rgb(0, 0, 0); transform: scaleX(1.2); transform-origin: 0px 0px; top: 1166px; left: 581.8px;">6038513,2</div>
<div class="t" style="font-size: 25px; color: rgb(0, 0, 0); font-weight: 700; font-family: &quot;Liberation Serif&quot;, serif; -webkit-text-stroke: 0.35px rgb(0, 0, 0); transform: scaleX(1.2); transform-origin: 0px 0px; top: 1195px; left: 694.3px;">7</div>
<div class="t" style="font-size: 24px; color: rgb(17, 17, 17); letter-spacing: 0.601px; top: 1181.5px; left: 1965px;">1118229,36</div>
<svg class="a" style="left:6px;top:1263px" width="12" height="13" viewBox="0 0 12 13"><polyline points="10,1.5 3,6.5 10,11.5" fill="none" stroke="#606060" stroke-width="2.6"></polyline></svg>
<div class="a" style="left:197px;top:1258px;width:413px;height:22px;background:#cdcdcd"></div>
<svg class="a" style="left:2116px;top:1263px" width="12" height="13" viewBox="0 0 12 13"><polyline points="2,1.5 9,6.5 2,11.5" fill="none" stroke="#606060" stroke-width="2.6"></polyline></svg>
<div class="a" style="left:5px;top:1285px;width:187px;height:35px;border:2px solid #222;background:#f0f0f0"></div>
<div class="t" style="font-size: 16px; color: rgb(26, 26, 26); letter-spacing: 0.202px; top: 1295px; left: 8.3px;">Головна</div>
<div class="a" style="left:195px;top:1286px;width:187px;height:34px;border:1.5px solid #3f8fdf;background:#ffd0a2"></div>
<div class="t" style="font-size: 16px; color: rgb(26, 26, 26); letter-spacing: 0.474px; top: 1295px; left: 198.5px;">Список: Чеки</div>
<div class="a" style="left:0;top:1322px;width:2159px;height:3px;background:#e2e2e2"></div>
<div class="a" style="left:1601px;top:242px;width:359px;height:386px;background:#fff;border:2px solid #111"></div>
<div class="a" style="left:1934px;top:244px;width:23px;height:382px;background:#f0f0f0"></div>
<svg class="a" style="left:1939px;top:252px" width="13" height="10" viewBox="0 0 13 10"><polyline points="1.5,8 6.5,2.5 11.5,8" fill="none" stroke="#606060" stroke-width="2.4"></polyline></svg>
<div class="a" style="left:1934px;top:269px;width:23px;height:311px;background:#cdcdcd"></div>
<svg class="a" style="left:1939px;top:608px" width="13" height="10" viewBox="0 0 13 10"><polyline points="1.5,2 6.5,7.5 11.5,2" fill="none" stroke="#606060" stroke-width="2.4"></polyline></svg>
<div class="t" style="font-size: 16.4px; color: rgb(26, 26, 26); letter-spacing: 0.15px; top: 249.4px; left: 1630px;">(Все)</div>
<div class="t" style="font-size: 16.4px; color: rgb(26, 26, 26); letter-spacing: 0.15px; top: 274.9px; left: 1630px;">(Фільтр...)</div>
<div class="a" style="left:1628px;top:294.5px;width:305px;height:25.5px;background:#0078d7"></div>
<div class="a" style="left:1606px;top:298.0px;width:19px;height:19px;border:1.5px solid #0078d7;background:#fff"></div>
<div class="t" style="font-size: 16.4px; color: rgb(255, 255, 255); letter-spacing: 0.15px; top: 300.4px; left: 1630px;">(Заготівлі)</div>
<div class="t" style="font-size: 16.4px; color: rgb(26, 26, 26); letter-spacing: 0.15px; top: 325.9px; left: 1630px;">(Непорожні)</div>
<div class="a" style="left:1606px;top:349.0px;width:19px;height:19px;border:1.5px solid #333;background:#fff"></div>
<div class="t" style="font-size: 16.4px; color: rgb(26, 26, 26); letter-spacing: 0.083px; top: 351.4px; left: 1630px;">Бонусная ДК (пенсионная)</div>
<div class="a" style="left:1606px;top:374.5px;width:19px;height:19px;border:1.5px solid #333;background:#fff"></div>
<div class="t" style="font-size: 16.4px; color: rgb(26, 26, 26); letter-spacing: 0.15px; top: 376.9px; left: 1630px;">Бонусная ДК (стандартная)</div>
<div class="a" style="left:1606px;top:400.0px;width:19px;height:19px;border:1.5px solid #333;background:#fff"></div>
<div class="t" style="font-size: 16.4px; color: rgb(26, 26, 26); letter-spacing: 0.02px; top: 402.4px; left: 1630px;">Медикард Терапия Плюс Астра Зенека</div>
<div class="a" style="left:1606px;top:425.5px;width:19px;height:19px;border:1.5px solid #333;background:#fff"></div>
<div class="t" style="font-size: 16.4px; color: rgb(26, 26, 26); letter-spacing: 0.15px; top: 427.9px; left: 1631px;">Олег Наценка +23%</div>
<div class="a" style="left:1606px;top:451.0px;width:19px;height:19px;border:1.5px solid #333;background:#fff"></div>
<div class="t" style="font-size: 16.4px; color: rgb(26, 26, 26); letter-spacing: 0.15px; top: 453.4px; left: 1631px;">Олег Скидка -7% (новое)</div>
<div class="a" style="left:1606px;top:476.5px;width:19px;height:19px;border:1.5px solid #333;background:#fff"></div>
<div class="t" style="font-size: 16.4px; color: rgb(26, 26, 26); letter-spacing: 0.15px; top: 478.9px; left: 1630px;">Разом от Абботт (Гептрал)</div>
<div class="a" style="left:1606px;top:502.0px;width:19px;height:19px;border:1.5px solid #333;background:#fff"></div>
<div class="t" style="font-size: 16.4px; color: rgb(26, 26, 26); letter-spacing: 0.15px; top: 504.4px; left: 1631px;">Скидка 10%</div>
<div class="a" style="left:1606px;top:527.5px;width:19px;height:19px;border:1.5px solid #333;background:#fff"></div>
<div class="t" style="font-size: 16.4px; color: rgb(26, 26, 26); letter-spacing: 0.15px; top: 529.9px; left: 1631px;">Скидка -22%</div>
<div class="a" style="left:1606px;top:553.0px;width:19px;height:19px;border:1.5px solid #333;background:#fff"></div>
<div class="t" style="font-size: 16.4px; color: rgb(26, 26, 26); letter-spacing: 0.15px; top: 555.4px; left: 1631px;">Скидка 4%</div>
<div class="a" style="left:1606px;top:578.5px;width:19px;height:19px;border:1.5px solid #333;background:#fff"></div>
<div class="t" style="font-size: 16.4px; color: rgb(26, 26, 26); letter-spacing: 0.15px; top: 580.9px; left: 1631px;">Скидка -7% by Артур</div>
<div class="a" style="left:1606px;top:604.0px;width:19px;height:19px;border:1.5px solid #333;background:#fff"></div>
<div class="t" style="font-size: 16.4px; color: rgb(26, 26, 26); letter-spacing: 0.15px; top: 606.4px; left: 1631px;">Социальные часы 10% (9-12)</div>
<div class="a" style="left:1936px;top:224px;width:22px;height:26px;background:#fafafa;border:1px solid #e8e8e8"></div>
<svg class="a" style="left:1939px;top:227px" width="16" height="16" viewBox="0 0 16 16"><rect x="1" y="1" width="14" height="14" fill="none" stroke="#3a3a3a" stroke-width="1.3"></rect><path d="M4,4.5 L12,4.5 L9,8.5 L9,11.5 L7,11.5 L7,8.5 Z" fill="none" stroke="#3a3a3a" stroke-width="1.2"></path></svg>
<svg class="a" style="left:0;top:0" width="2159" height="1325" viewBox="0 0 2159 1325">
<polygon points="1595.5,60 1597,62.5 1918,225.5 1921,219" fill="#f00"></polygon>
<polygon points="1931.5,228 1920,212.5 1913,229" fill="#f00" stroke="#f00" stroke-width="1.5" stroke-linejoin="round"></polygon>
<rect x="1933" y="218" width="28" height="30.5" rx="2" fill="none" stroke="#f00" stroke-width="3.8"></rect>
</svg>
</body></html>
